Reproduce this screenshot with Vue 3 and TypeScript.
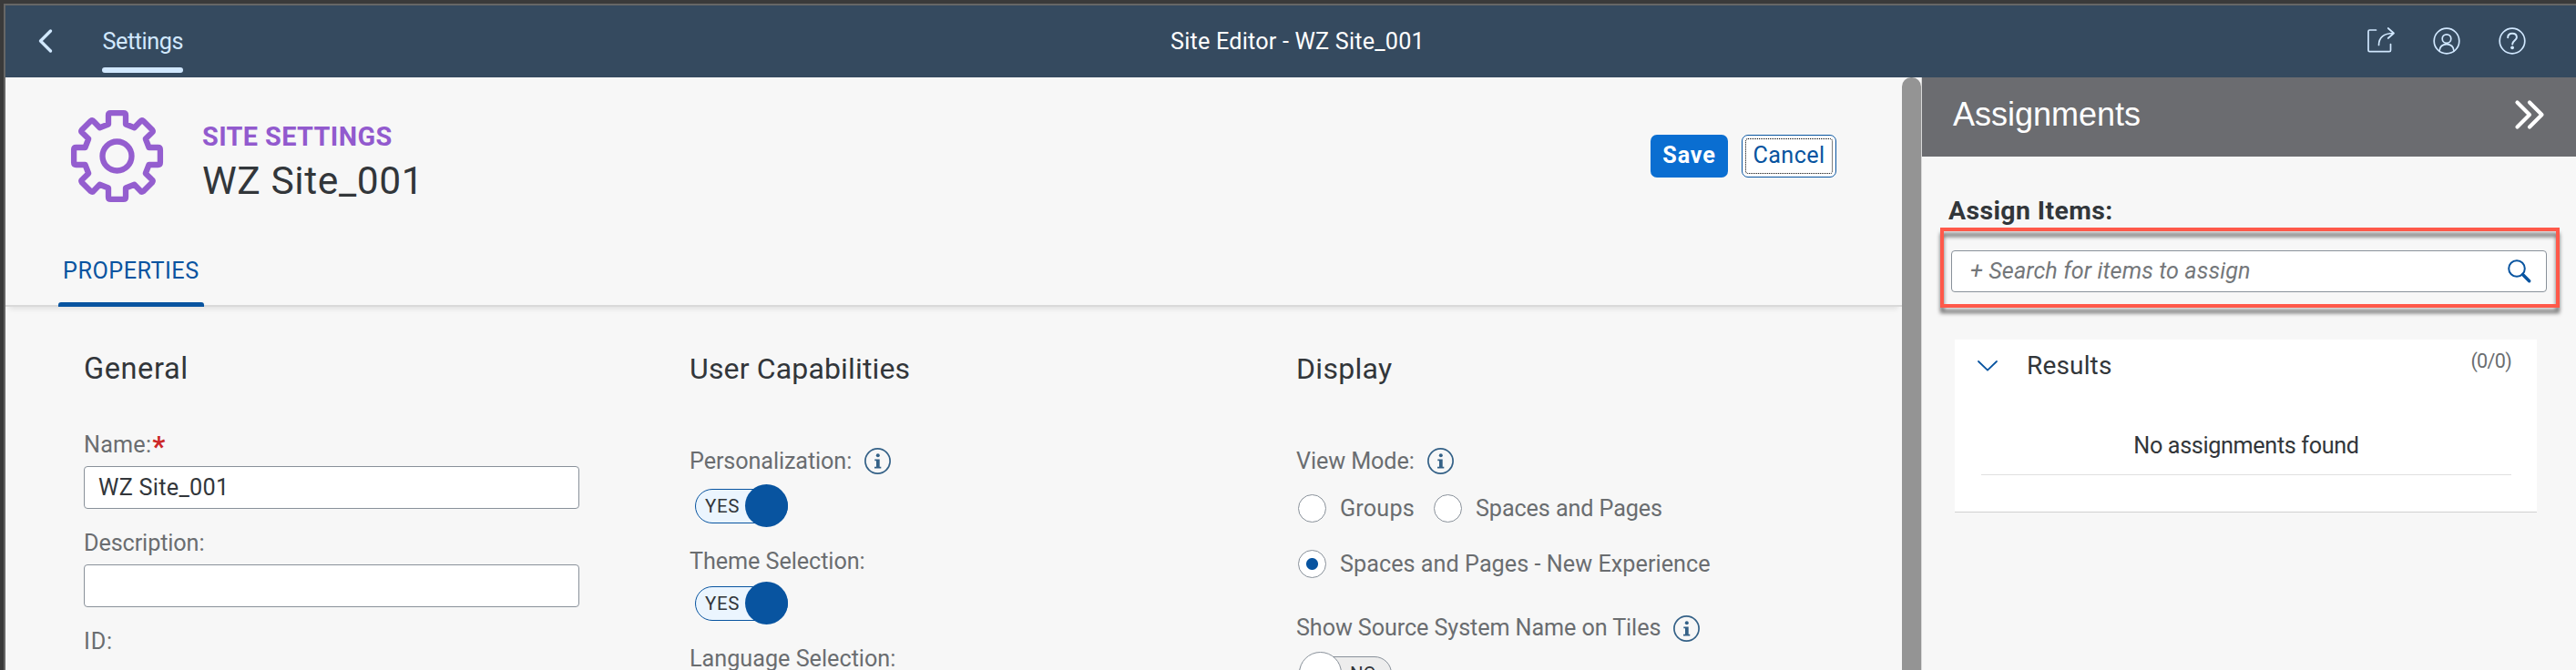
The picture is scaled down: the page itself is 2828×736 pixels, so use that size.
<script setup lang="ts">
import { ref } from 'vue'

const siteName = ref('WZ Site_001')
const description = ref('')
</script>

<template>
  <div class="window">
    <header class="shell">
      <div class="shell-left">
        <svg class="back" viewBox="0 0 16 26"><path d="M13.500 2 2.500 13l11 11" /></svg>
        <a class="nav-link">Settings</a>
      </div>
      <h1 class="shell-title">Site Editor - WZ Site_001</h1>
      <div class="shell-icons">
        <svg viewBox="0 0 30 30"><path d="M9.500 3H2.500Q1 3 1 4.500v20.700Q1 26.700 2.500 26.700h21.500Q25.500 26.700 25.500 25.200V18.500" /><path d="M12.500 19.500C12.500 11 18 6.500 28.500 6.500M22.700 1l6.300 5.500-6.300 5.500" /></svg>
        <svg viewBox="0 0 30 30"><circle cx="15" cy="15" r="13.800" /><circle cx="15" cy="12.600" r="4.800" /><path d="M7 26c.5-5 3.500-7.300 8-7.300s7.500 2.300 8 7.300" /></svg>
        <svg viewBox="0 0 30 30"><circle cx="15" cy="15" r="13.800" /><path d="M10.200 11.200c0-3 2-4.500 4.800-4.500 2.900 0 4.900 1.600 4.900 4.200 0 3.600-4.700 3.700-4.700 7.600" stroke-width="2" /><circle class="dot" cx="15.100" cy="22.300" r="1.900" /></svg>
      </div>
    </header>

    <div class="body">
      <main class="editor">
        <section class="object-header">
          <div class="identity">
            <svg class="gear" viewBox="-50.500 -50.500 101 101">
              <path d="M-7-47.400H7Q9.500-47.400 9.500-45V-35L19-31.300 25.500-38Q27-40 29-38.500L38.500-29Q40-27 38-25.500L31.300-19 35-9.500H45Q47.400-9.500 47.400-7V7Q47.400 9.500 45 9.500H35L31.300 19 38 25.500Q40 27 38.500 29L29 38.500Q27 40 25.500 38L19 31.300 9.500 35V45Q9.500 47.400 7 47.400H-7Q-9.500 47.400-9.500 45V35L-19 31.300-25.500 38Q-27 40-29 38.500L-38.500 29Q-40 27-38 25.500L-31.300 19-35 9.500H-45Q-47.400 9.500-47.400 7V-7Q-47.400-9.500-45-9.500H-35L-31.300-19-38-25.500Q-40-27-38.500-29L-29-38.500Q-27-40-25.500-38L-19-31.300-9.500-35V-45Q-9.500-47.400-7-47.400Z" />
              <circle r="16" />
            </svg>
            <div class="titles">
              <p class="kind">SITE SETTINGS</p>
              <h2 class="site-title">WZ Site_001</h2>
            </div>
            <div class="actions">
              <button class="btn save">Save</button>
              <button class="btn cancel"><span>Cancel</span></button>
            </div>
          </div>
          <nav class="tabs"><a class="tab">PROPERTIES</a></nav>
        </section>

        <section class="form">
          <div class="column general">
            <h3 class="heading">General</h3>
            <label class="label name">Name:<b>*</b></label>
            <input v-model="siteName" class="input" />
            <label class="label desc">Description:</label>
            <input v-model="description" class="input" />
            <label class="label id">ID:</label>
          </div>

          <div class="column user">
            <h3 class="heading">User Capabilities</h3>
            <div class="label row">Personalization:<i class="info"><svg viewBox="0 0 29 29"><circle cx="14.500" cy="14.500" r="13.600" /><circle class="fill" cx="14.800" cy="8.300" r="2" /><path class="fill" d="M11.300 12.500h5.400v8.200h1.600v1.700h-7.300v-1.700h2v-6.400h-1.700z" /></svg></i></div>
            <div class="switch on"><span>YES</span><i /></div>
            <div class="label theme">Theme Selection:</div>
            <div class="switch on second"><span>YES</span><i /></div>
            <div class="label lang">Language Selection:</div>
          </div>

          <div class="column display">
            <h3 class="heading">Display</h3>
            <div class="label row">View Mode:<i class="info"><svg viewBox="0 0 29 29"><circle cx="14.500" cy="14.500" r="13.600" /><circle class="fill" cx="14.800" cy="8.300" r="2" /><path class="fill" d="M11.300 12.500h5.400v8.200h1.600v1.700h-7.300v-1.700h2v-6.400h-1.700z" /></svg></i></div>
            <div class="radios first">
              <span class="radio" /><span class="label groups">Groups</span>
              <span class="radio" /><span class="label spaces">Spaces and Pages</span>
            </div>
            <div class="radios">
              <span class="radio checked" /><span class="label experience">Spaces and Pages - New Experience</span>
            </div>
            <div class="label row tiles">Show Source System Name on Tiles<i class="info"><svg viewBox="0 0 29 29"><circle cx="14.500" cy="14.500" r="13.600" /><circle class="fill" cx="14.800" cy="8.300" r="2" /><path class="fill" d="M11.300 12.500h5.400v8.200h1.600v1.700h-7.300v-1.700h2v-6.400h-1.700z" /></svg></i></div>
            <div class="switch off"><i /><span>NO</span></div>
          </div>
        </section>
      </main>

      <div class="scroll"><div class="thumb" /></div>

      <aside class="panel">
        <header class="panel-head">
          <h2>Assignments</h2>
          <svg viewBox="0 0 32 32"><path d="M2.500 2.500 16 16 2.500 29.500M16 2.500 29.500 16 16 29.500" /></svg>
        </header>
        <p class="assign-label">Assign Items:</p>
        <div class="highlight">
          <div class="search">
            <span>+ Search for items to assign</span>
            <svg viewBox="0 0 26 26"><circle cx="10" cy="10" r="8.800" /><path d="m16.500 16.500 7.200 7.200" /></svg>
          </div>
        </div>
        <section class="card">
          <div class="card-head">
            <svg viewBox="0 0 22 12"><path d="m1 1 10 9.700L21 1" /></svg>
            <h3>Results</h3>
            <span class="count">(0/0)</span>
          </div>
          <p class="empty">No assignments found</p>
        </section>
      </aside>
    </div>
  </div>
</template>

<style>
html, body { margin: 0; overflow: hidden; }
</style>

<style scoped>
* { box-sizing: border-box; }
h1, h2, h3, p { margin: 0; font-weight: 400; }
svg { display: block; fill: none; stroke-linecap: round; stroke-linejoin: round; flex: none; overflow: visible; }

.window {
  width: 2828px;
  height: 736px;
  display: flex;
  flex-direction: column;
  overflow: hidden;
  padding: 4px 0 0 4px;
  background: linear-gradient(#666, #666) 4px 4px no-repeat, #3a3a3a;
  font-family: Roboto, "Noto Sans", sans-serif;
  font-size: 25.2px;
  color: #32363a;
}

.shell {
  flex: none;
  margin: 2px 0 0 2px;
  height: 79px;
  display: grid;
  grid-template-columns: 1fr auto 1fr;
  padding: 0 55px 0 36px;
  background: #354a5f;
}
.shell-left { display: flex; align-items: flex-start; }
.back { width: 16px; height: 26px; margin-top: 26px; stroke: #d1e8ff; stroke-width: 3.4; }
.nav-link {
  position: relative;
  margin-left: 54px;
  width: 89px;
  height: 74px;
  padding-left: 0.5px;
  line-height: 80px;
  letter-spacing: -0.43px;
  color: #d1e8ff;
  white-space: nowrap;
}
.nav-link::after {
  content: "";
  position: absolute;
  inset: auto 0 0 0;
  height: 6px;
  border-radius: 3px;
  background: #d1e8ff;
}
.shell-title { margin-left: 34px; font-size: 25.2px; line-height: 80px; letter-spacing: 0.2px; color: #fff; }
.shell-icons { display: flex; justify-content: flex-end; gap: 42px; padding-top: 24px; }
.shell-icons svg { width: 30px; height: 30px; stroke: #d1e8ff; stroke-width: 1.7; }
.shell-icons .dot { fill: #d1e8ff; stroke: none; }

.body { flex: 1; display: flex; margin-left: 2px; background: #f7f7f7; min-height: 0; }
.editor { width: 2082px; flex: none; }

.object-header { height: 252px; border-bottom: 2px solid #d9d9d9; box-shadow: 0 6px 6px -4px rgba(0, 0, 0, 0.1); }
.identity { display: flex; height: 193px; padding: 36px 72px 0 72px; }
.gear { width: 101px; height: 101px; stroke: #945ecf; stroke-width: 6.3; }
.titles { margin-left: 43px; }
.kind { margin-top: 11px; font-size: 28.8px; line-height: 36px; font-weight: 700; letter-spacing: 0.42px; color: #925ace; }
.site-title { margin-top: 5px; font-size: 42.5px; line-height: 52px; letter-spacing: 0.6px; }
.actions { margin-left: auto; padding-top: 27px; display: flex; gap: 15px; }
.btn { height: 47px; padding: 0; border: 0; border-radius: 7px; font: 25.2px Roboto, sans-serif; }
.save { width: 85px; background: #0a6ed1; color: #fff; font-weight: 700; letter-spacing: 0.85px; padding-bottom: 2px; }
.cancel { width: 104px; padding: 3px; border: 1px solid #0854a0; background: #fff; color: #0854a0; }
.cancel span { display: block; height: 39px; border: 1px dotted #000; border-radius: 3px; line-height: 36px; letter-spacing: 0.4px; }
.tabs { height: 59px; padding-left: 58px; }
.tab {
  position: relative;
  display: block;
  width: 160px;
  height: 59px;
  padding-left: 5px;
  line-height: 40px;
  letter-spacing: 0.5px;
  color: #0854a0;
}
.tab::after {
  content: "";
  position: absolute;
  inset: auto 0 0 0;
  height: 5px;
  border-radius: 3px 3px 0 0;
  background: #0854a0;
}

.form { display: flex; padding-left: 86px; }
.column { width: 666px; flex: none; }
.column:first-child { width: 665px; }
.heading { margin-top: 48px; height: 40px; font-size: 32px; line-height: 40px; }
.label { display: block; line-height: 30px; padding-top: 1px; color: #6a6d70; white-space: nowrap; }
.general .heading { font-size: 32.5px; letter-spacing: 0.6px; }
.general .label { height: 30px; }
.name { margin-top: 48px; letter-spacing: 0.2px; }
.name b { margin-left: 1px; font-size: 31px; line-height: 20px; vertical-align: -4px; color: #cc2828; }
.input {
  display: block;
  width: 544px;
  height: 47px;
  margin: 9px 0 0 0;
  padding: 0 15px;
  border: 1px solid #89919a;
  border-radius: 4px;
  background: #fff;
  color: #32363a;
  font: 25.2px Roboto, sans-serif;
  letter-spacing: 0.3px;
}
.desc { margin-top: 22px; letter-spacing: -0.1px; }
.id { margin-top: 22px; letter-spacing: 0.8px; }

.user .heading { letter-spacing: 0.15px; }
.row { display: flex; align-items: center; margin-top: 66px; height: 30px; letter-spacing: -0.1px; }
.info { width: 29px; height: 29px; margin-left: 14px; }
.info svg { width: 29px; height: 29px; stroke: #346187; stroke-width: 1.7; }
.info .fill { fill: #346187; stroke: none; }
.switch {
  position: relative;
  display: flex;
  align-items: center;
  width: 102px;
  height: 38px;
  margin: 16px 0 0 6px;
  border: 1px solid #0854a0;
  border-radius: 19px;
  background: #ebf5fe;
  font-size: 20.5px;
}
.switch span { margin-left: 10px; letter-spacing: 0.7px; }
.switch i { position: absolute; width: 47px; height: 47px; border-radius: 50%; }
.on i { right: -1px; top: -6px; background: #0854a0; }
.theme { height: 30px; margin-top: 26px; letter-spacing: -0.07px; }
.second { margin-top: 13px; }
.lang { margin-top: 26px; }

.display .heading { letter-spacing: 0.3px; }
.radios { display: flex; align-items: center; height: 31px; margin: 30px 0 0 2px; }
.radios.first { margin-top: 22px; }
.radio { flex: none; width: 31px; height: 31px; border: 1.5px solid #89919a; border-radius: 50%; background: #fff; }
.radio.checked { background: radial-gradient(circle, #0854a0 6px, #fff 7px); }
.radio + .label { margin-left: 15px; padding-top: 0; }
.groups { width: 103px; letter-spacing: 0.18px; }
.spaces { letter-spacing: -0.1px; }
.experience { letter-spacing: 0.04px; }
.tiles { margin-top: 40px; padding-top: 0; }
.off { margin: 16px 0 0 3px; border-color: #89919a; background: #ededed; }
.off i { left: -1px; top: -6px; border: 1px solid #89919a; background: #fff; }
.off span { margin-left: 55px; letter-spacing: 0; }

.scroll { width: 22px; flex: none; border-right: 1px solid #d9d9d9; }
.thumb { height: 100%; border-radius: 10px 10px 0 0; background: #949494; }

.panel { flex: 1; min-width: 0; }
.panel-head { display: flex; justify-content: space-between; height: 87px; padding: 0 35px 0 34px; background: #6b6c70; color: #fff; }
.panel-head h2 { font: 36px/82px "Liberation Sans", Arial, sans-serif; }
.panel-head svg { width: 32px; height: 32px; margin-top: 25px; stroke: #fff; stroke-width: 4.2; }
.assign-label { height: 36px; margin: 41px 0 0 29px; font-size: 28.4px; font-weight: 700; line-height: 38px; letter-spacing: 0.4px; }
.highlight { position: relative; width: 680px; height: 88px; margin: 1px 0 0 20px; padding: 25px 14px 0 12px; }
/* Annotation frame laid over the search field, casting its own shadow */
.highlight::after {
  content: "";
  position: absolute;
  inset: 0;
  border: 4px solid #ff594a;
  filter: drop-shadow(0 6px 2px rgba(0, 0, 0, 0.55));
  pointer-events: none;
}
.search { display: flex; justify-content: space-between; align-items: center; height: 46px; padding: 0 16px 0 20px; border: 1px solid #89919a; border-radius: 4px; background: #fff; }
.search span { padding-bottom: 1px; font-style: italic; letter-spacing: 0.1px; color: #74777a; }
.search svg { width: 26px; height: 26px; stroke: #0854a0; stroke-width: 2; }
.search path { stroke-width: 3.5; }

.card { width: 639px; height: 190px; margin: 35px 0 0 36px; padding: 0 28px 0 25px; background: #fff; border-bottom: 1px solid #d0d0d0; }
.card-head { display: flex; height: 56px; line-height: 57px; }
.card-head svg { width: 22px; height: 12px; margin-top: 23px; stroke: #0854a0; stroke-width: 1.8; }
.card-head h3 { margin-left: 32px; font-size: 28px; letter-spacing: 0.16px; }
.count { margin-left: auto; font-size: 21.6px; line-height: 47px; letter-spacing: -0.7px; color: #6a6d70; }
.empty { margin: 0 0 0 4px; padding-top: 41px; height: 93px; line-height: 40px; text-align: center; letter-spacing: -0.35px; border-bottom: 1px solid #e0e0e0; }
</style>
